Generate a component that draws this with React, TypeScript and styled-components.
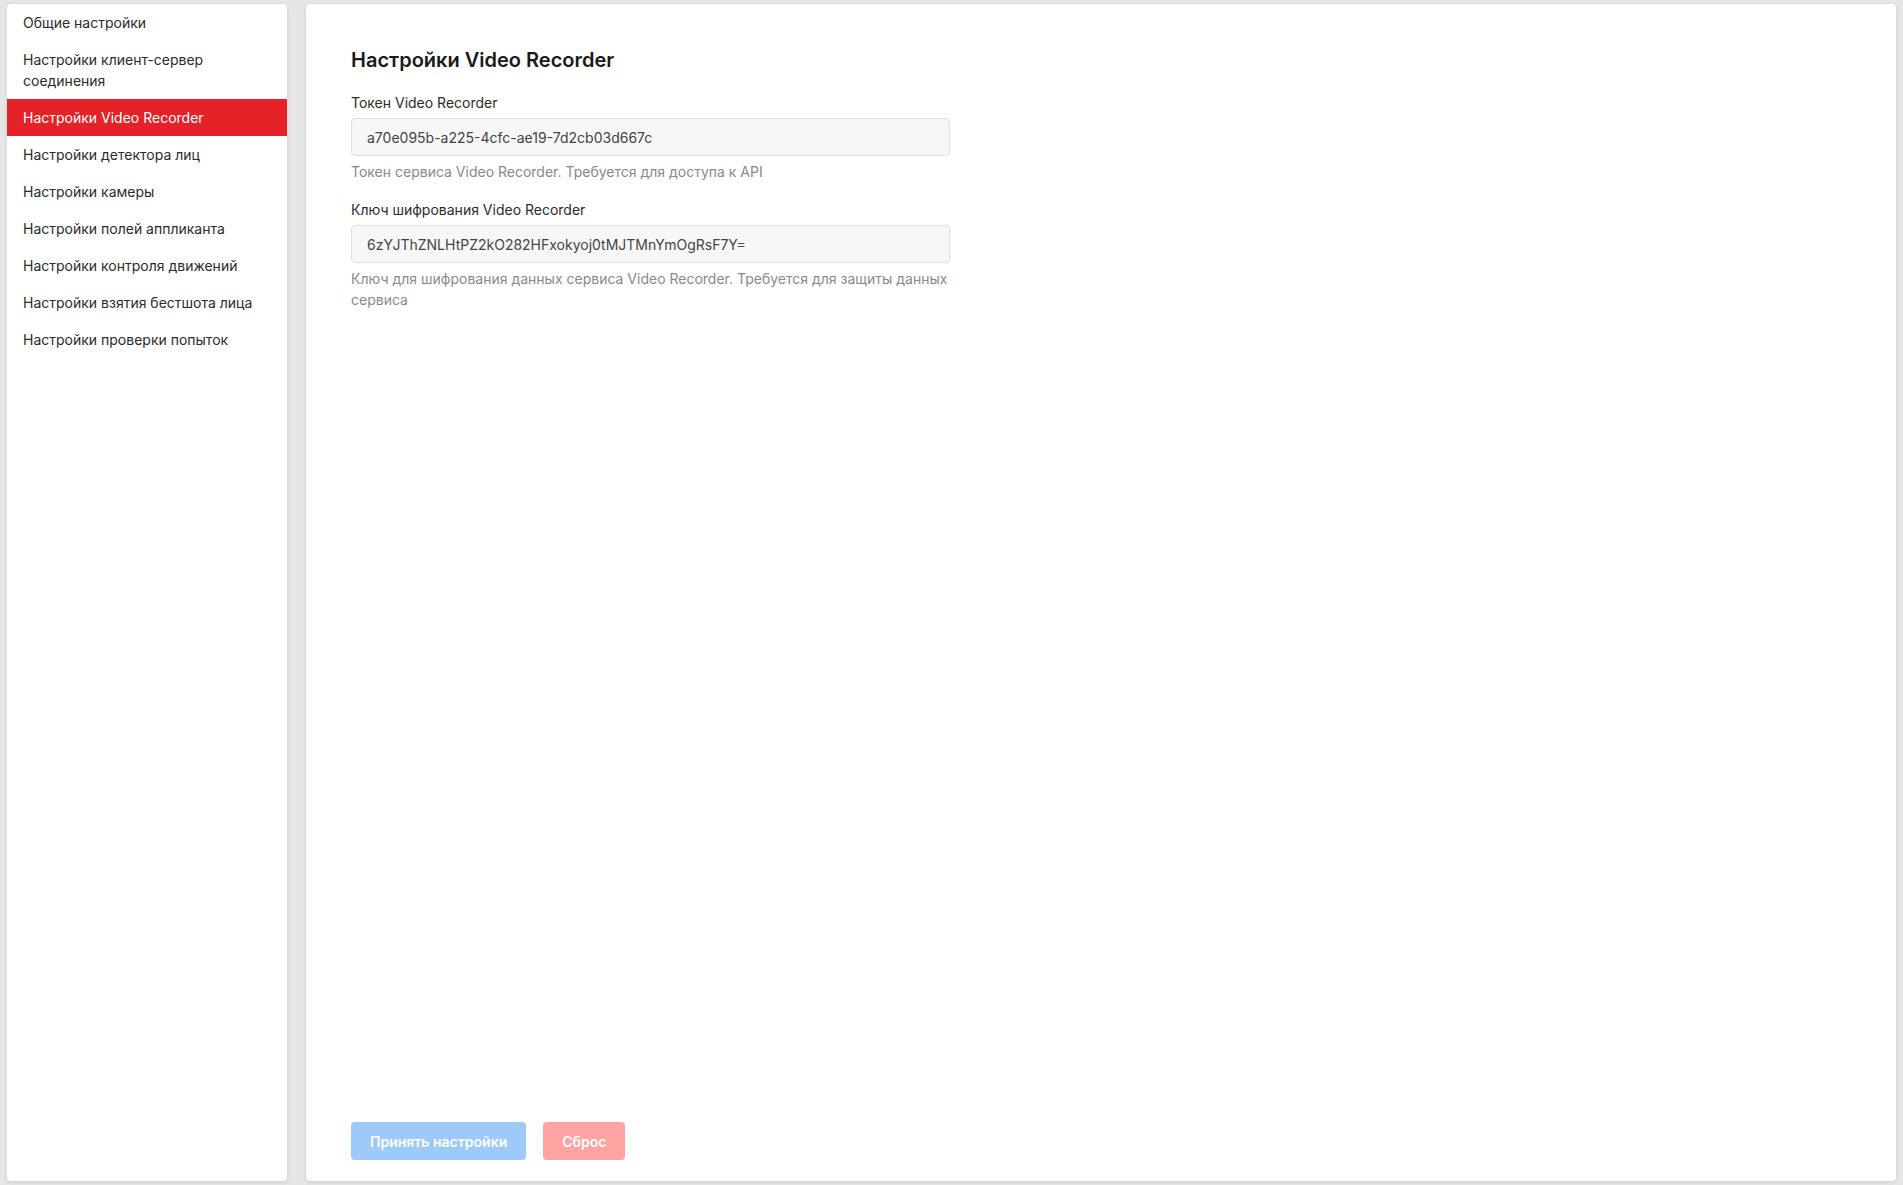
import React, { useState } from 'react';
import styled, { createGlobalStyle } from 'styled-components';

const GlobalStyle = createGlobalStyle`
  html, body {
    margin: 0;
    padding: 0;
    background-color: #e6e6e6;
    font-family: Inter, "Noto Sans", sans-serif;
  }
  * {
    box-sizing: border-box;
  }
`;

const Layout = styled.div`
  display: flex;
  gap: 19px;
  height: 1185px;
  padding: 4px 7px 4px 7px;
`;

const Sidebar = styled.nav`
  width: 280px;
  flex-shrink: 0;
  background-color: #ffffff;
  border-radius: 4px;
  box-shadow: 0 1px 4px rgba(0, 0, 0, 0.12);
  display: flex;
  flex-direction: column;
`;

const NavItem = styled.div<{ $active?: boolean }>`
  padding: 8px 16px;
  font-size: 14px;
  line-height: 21px;
  color: ${(p) => (p.$active ? '#ffffff' : '#2b2b2b')};
  background-color: ${(p) => (p.$active ? '#e52228' : 'transparent')};
  cursor: pointer;
`;

const Main = styled.main`
  flex: 1;
  background-color: #ffffff;
  border-radius: 4px;
  box-shadow: 0 1px 4px rgba(0, 0, 0, 0.12);
  padding: 42px 45px 21px 45px;
  display: flex;
  flex-direction: column;
`;

const Form = styled.div`
  flex: 1;
  width: 599px;
`;

const Title = styled.h2`
  margin: 0 0 19px 0;
  font-size: 20px;
  line-height: 28px;
  font-weight: 600;
  color: #1a1a1a;
`;

const Field = styled.div`
  margin-bottom: 18px;
`;

const Label = styled.label`
  display: block;
  font-size: 14px;
  line-height: 20px;
  color: #2b2b2b;
  margin-bottom: 5px;
`;

const Input = styled.input`
  display: block;
  width: 100%;
  height: 38px;
  padding: 0 15px;
  border: 1px solid #e0e0e0;
  border-radius: 4px;
  background-color: #f7f7f7;
  font-family: Inter, "Noto Sans", sans-serif;
  font-size: 14px;
  color: #444;
  outline: none;
`;

const Hint = styled.div`
  margin-top: 5px;
  font-size: 14px;
  line-height: 21px;
  color: #8a8a8a;
`;

const Actions = styled.div`
  display: flex;
  gap: 17px;
`;

const Button = styled.button<{ $variant: 'primary' | 'danger' }>`
  height: 38px;
  padding: 0 19px;
  border: none;
  border-radius: 4px;
  font-family: Inter, "Noto Sans", sans-serif;
  font-size: 14px;
  font-weight: 600;
  color: #ffffff;
  background-color: ${(p) => (p.$variant === 'primary' ? '#9dcaf9' : '#ffa3a3')};
  cursor: default;
`;

const menu = [
  'Общие настройки',
  'Настройки клиент-сервер соединения',
  'Настройки Video Recorder',
  'Настройки детектора лиц',
  'Настройки камеры',
  'Настройки полей аппликанта',
  'Настройки контроля движений',
  'Настройки взятия бестшота лица',
  'Настройки проверки попыток',
];

const App: React.FC = () => {
  const [active, setActive] = useState(2);
  const [token, setToken] = useState('a70e095b-a225-4cfc-ae19-7d2cb03d667c');
  const [key, setKey] = useState('6zYJThZNLHtPZ2kO282HFxokyoj0tMJTMnYmOgRsF7Y=');

  return (
    <>
      <GlobalStyle />
      <Layout>
        <Sidebar>
          {menu.map((item, idx) => (
            <NavItem key={idx} $active={idx === active} onClick={() => setActive(idx)}>
              {idx === 1 ? (
                <>
                  Настройки клиент-сервер
                  <br />
                  соединения
                </>
              ) : (
                item
              )}
            </NavItem>
          ))}
        </Sidebar>
        <Main>
          <Form>
            <Title>Настройки Video Recorder</Title>
            <Field>
              <Label>Токен Video Recorder</Label>
              <Input value={token} onChange={(e) => setToken(e.target.value)} />
              <Hint>Токен сервиса Video Recorder. Требуется для доступа к API</Hint>
            </Field>
            <Field>
              <Label>Ключ шифрования Video Recorder</Label>
              <Input value={key} onChange={(e) => setKey(e.target.value)} />
              <Hint>
                Ключ для шифрования данных сервиса Video Recorder. Требуется для защиты данных сервиса
              </Hint>
            </Field>
          </Form>
          <Actions>
            <Button $variant="primary" disabled>
              Принять настройки
            </Button>
            <Button $variant="danger" disabled>
              Сброс
            </Button>
          </Actions>
        </Main>
      </Layout>
    </>
  );
};

export default App;
